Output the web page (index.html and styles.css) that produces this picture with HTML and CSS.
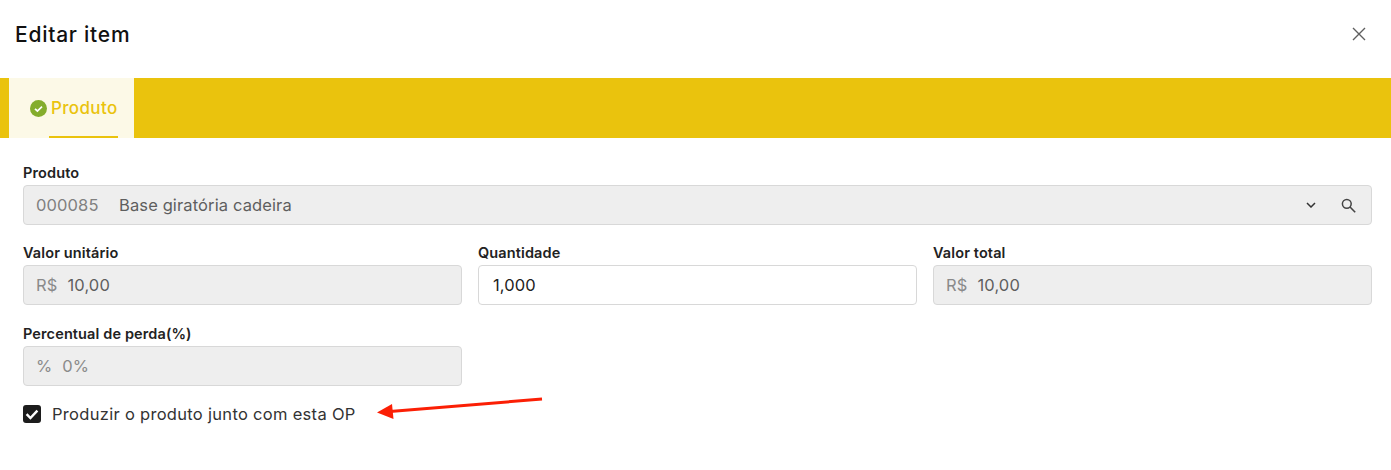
FILE: index.html
```html
<!DOCTYPE html>
<html lang="pt-BR">
<head>
    <meta charset="UTF-8">
    <title>Editar item</title>
    <link rel="stylesheet" href="styles.css">
</head>
<body>
    <div class="modal">
        <div class="modal-header">
            <h1 class="modal-title">Editar item</h1>
            <svg class="close-icon" width="14" height="14" viewBox="0 0 14 14">
                <path d="M1 1L13 13M13 1L1 13" stroke="#5f5f5f" stroke-width="1.4" fill="none"/>
            </svg>
        </div>

        <div class="tabs">
            <div class="tab">
                <svg class="tab-check" width="17" height="17" viewBox="0 0 17 17">
                    <circle cx="8.5" cy="8.5" r="8.5" fill="#84ad2c"/>
                    <path d="M5 8.8L7.4 11L12 6.6" stroke="#fff" stroke-width="1.7" fill="none"/>
                </svg>
                <span class="tab-label">Produto</span>
                <div class="tab-line"></div>
            </div>
        </div>

        <div class="form">
            <div class="field">
                <label class="field-label">Produto</label>
                <div class="input disabled">
                    <span class="code">000085</span>
                    <span class="value product-name">Base giratória cadeira</span>
                    <svg class="chevron" width="10" height="6" viewBox="0 0 10 6">
                        <path d="M1 1L5 5L9 1" stroke="#333" stroke-width="1.5" fill="none"/>
                    </svg>
                    <svg class="search" width="15" height="15" viewBox="0 0 15 15">
                        <circle cx="5.8" cy="5.8" r="4.4" stroke="#444" stroke-width="1.5" fill="none"/>
                        <path d="M9 9L14.2 14.2" stroke="#444" stroke-width="1.6" fill="none"/>
                    </svg>
                </div>
            </div>

            <div class="row">
                <div class="field">
                    <label class="field-label">Valor unitário</label>
                    <div class="input disabled">
                        <span class="prefix">R$</span>
                        <span class="value">10,00</span>
                    </div>
                </div>
                <div class="field">
                    <label class="field-label">Quantidade</label>
                    <div class="input">
                        <span class="value strong">1,000</span>
                    </div>
                </div>
                <div class="field">
                    <label class="field-label">Valor total</label>
                    <div class="input disabled">
                        <span class="prefix">R$</span>
                        <span class="value">10,00</span>
                    </div>
                </div>
            </div>

            <div class="row">
                <div class="field">
                    <label class="field-label">Percentual de perda(%)</label>
                    <div class="input disabled">
                        <span class="prefix">%</span>
                        <span class="value light">0%</span>
                    </div>
                </div>
            </div>

            <div class="check-row">
                <div class="checkbox">
                    <svg width="18" height="18" viewBox="0 0 18 18">
                        <path d="M3.6 9.2L7.4 13L14.4 5.6" stroke="#fff" stroke-width="2.4" fill="none"/>
                    </svg>
                </div>
                <span class="check-label">Produzir o produto junto com esta OP</span>
            </div>
        </div>

        <!-- seta de anotação -->
        <svg class="arrow" width="170" height="26" viewBox="0 0 170 26">
            <path d="M166 3L14 15.5" stroke="#fb1f05" stroke-width="3" fill="none"/>
            <path d="M1 16.5L16 8L17.5 23Z" fill="#fb1f05"/>
        </svg>
    </div>
</body>
</html>
```

FILE: styles.css
```css
* {
    margin: 0;
    padding: 0;
    box-sizing: border-box;
}

body {
    font-family: Inter, "Noto Sans", sans-serif;
    background-color: #fff;
    color: #1a1a1a;
    overflow: hidden;
}

.modal {
    position: relative;
    width: 1391px;
    height: 470px;
}

.modal-header {
    height: 78px;
    display: flex;
    align-items: center;
    justify-content: space-between;
    padding: 0 25px 11px 15px;
}

.modal-title {
    margin-top: 2px;
    font-size: 21px;
    font-weight: 500;
    letter-spacing: 0.75px;
    color: #111;
}

.tabs {
    height: 60px;
    padding-left: 9px;
    background-color: #eac30d;
}

.tab {
    position: relative;
    width: 125px;
    height: 60px;
    padding-left: 21px;
    display: flex;
    align-items: center;
    gap: 4px;
    background-color: #fcf9e7;
}

.tab-label {
    font-size: 17px;
    font-weight: 500;
    letter-spacing: 0.35px;
    color: #eac30d;
}

.tab-line {
    position: absolute;
    left: 40px;
    bottom: 0;
    width: 69px;
    height: 2px;
    background-color: #eac30d;
}

.form {
    padding: 26px 19px 0 23px;
    display: flex;
    flex-direction: column;
    gap: 19.3px;
}

.row {
    display: grid;
    grid-template-columns: repeat(3, 439px);
    column-gap: 16px;
}

.field-label {
    display: block;
    height: 21px;
    font-size: 14.5px;
    line-height: 17px;
    font-weight: 600;
    letter-spacing: 0.12px;
    color: #222;
}

.input {
    height: 40px;
    padding: 0 12px;
    display: flex;
    align-items: center;
    border: 1px solid #d8d8d8;
    border-radius: 4px;
    background-color: #fff;
    font-size: 16.5px;
    letter-spacing: 0.12px;
}

.input.disabled {
    background-color: #eeeeee;
}

.code {
    width: 83px;
    color: #808080;
}

.prefix {
    margin-right: 10px;
    color: #8a8a8a;
}

.value {
    color: #5e5e5e;
}

.value.strong {
    padding-left: 2px;
    color: #222;
}

.value.light {
    color: #8a8a8a;
}

.product-name {
    flex: 1;
}

.chevron {
    margin-right: 25px;
}

.search {
    margin-right: 3px;
}

.check-row {
    margin-top: -1px;
    display: flex;
    align-items: center;
    gap: 11px;
}

.checkbox {
    width: 18px;
    height: 18px;
    border-radius: 3px;
    background-color: #1c1c1c;
}

.checkbox svg {
    display: block;
}

.check-label {
    font-size: 16.5px;
    letter-spacing: 0.3px;
    color: #333;
}

.arrow {
    position: absolute;
    left: 376px;
    top: 396px;
}
```
